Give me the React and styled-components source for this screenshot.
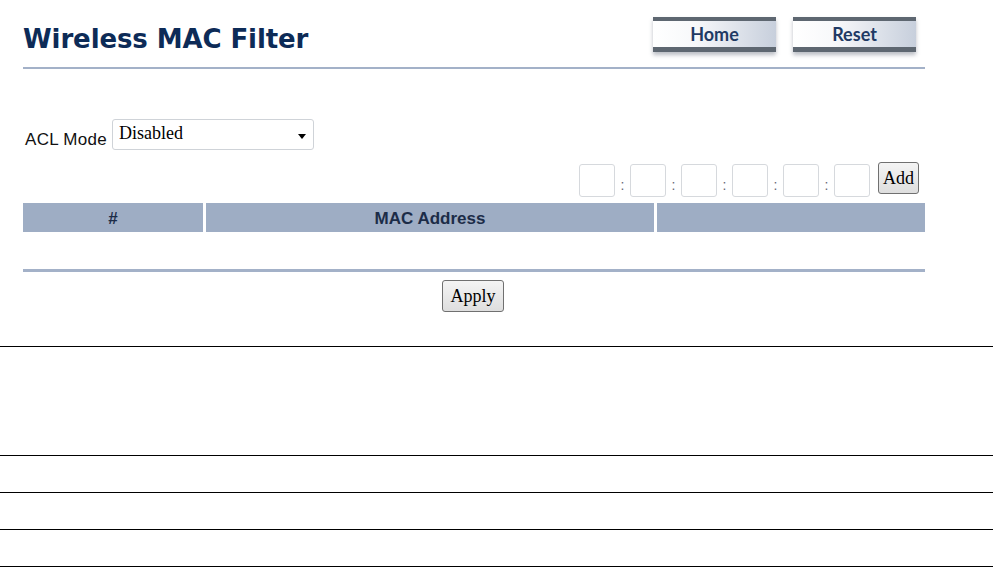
import React from "react";
import styled, { createGlobalStyle } from "styled-components";

const Global = createGlobalStyle`
  html, body { margin: 0; padding: 0; background: #fff; }
  body { font-family: "Liberation Sans", Arial, sans-serif; }
  * { box-sizing: border-box; }
`;

const Page = styled.div`
  width: 993px;
  height: 567px;
  overflow: hidden;
  display: flex;
  flex-direction: column;
`;

const Content = styled.div`
  margin-left: 23px;
  width: 902px;
  display: flex;
  flex-direction: column;
`;

const Header = styled.div`
  height: 67px;
  display: flex;
  justify-content: space-between;
  align-items: flex-start;
  padding-right: 9px;
`;

const Title = styled.h1`
  margin: 0;
  padding-top: 24px;
  font-family: "DejaVu Sans", Verdana, sans-serif;
  font-weight: bold;
  font-size: 26px;
  line-height: 30px;
  color: #0d2b57;
  letter-spacing: -0.1px;
`;

const NavButtons = styled.div`
  display: flex;
  gap: 17px;
  margin-top: 17px;
`;

const NavButton = styled.div`
  width: 123px;
  height: 35px;
  border-top: 4px solid #5e6771;
  border-bottom: 5px solid #5e6771;
  background: linear-gradient(to right, #ffffff 0%, #f7f8fa 35%, #c7cfdc 100%);
  box-shadow: 0 3px 4px rgba(60, 70, 90, 0.35);
  display: flex;
  align-items: center;
  justify-content: center;
  font-family: Lato, "Open Sans", sans-serif;
  font-weight: 700;
  font-size: 18px;
  color: #1f3a64;
  padding-bottom: 1px;
`;

const Rule = styled.div`
  height: ${(p) => p.$h}px;
  background: #a3b1c8;
`;

const AclRow = styled.div`
  display: flex;
  align-items: flex-end;
  gap: 5px;
  margin-top: 50px;
  padding-left: 2px;
`;

const Label = styled.span`
  font-size: 17px;
  line-height: 20px;
  letter-spacing: 0.3px;
  color: #111;
`;

const SelectBox = styled.div`
  width: 202px;
  height: 31px;
  border: 1px solid #cfd3d8;
  border-radius: 3px;
  display: flex;
  align-items: flex-start;
  justify-content: space-between;
  padding: 3px 7px 0 6px;
  font-family: "Liberation Serif", "Times New Roman", serif;
  font-size: 18px;
  line-height: 20px;
  color: #000;
`;

const Arrow = styled.span`
  width: 0;
  height: 0;
  margin-top: 11px;
  border-left: 4.5px solid transparent;
  border-right: 4.5px solid transparent;
  border-top: 5px solid #000;
`;

const MacRow = styled.div`
  display: flex;
  justify-content: flex-end;
  align-items: flex-start;
  margin-top: 12px;
  padding-right: 6px;
`;

const OctetInput = styled.input`
  width: 36px;
  height: 33px;
  margin-top: 2px;
  border: 1px solid #d6d9dd;
  border-radius: 3px;
  padding: 0;
  background: #fff;
`;

const Colon = styled.span`
  width: 15px;
  margin-top: 2px;
  height: 33px;
  display: flex;
  align-items: flex-end;
  justify-content: center;
  padding-bottom: 5px;
  font-size: 14px;
  line-height: 14px;
  color: #667;
`;

const FormButton = styled.button`
  height: 32px;
  width: ${(p) => p.$w}px;
  margin-left: ${(p) => p.$ml || 0}px;
  border: 1px solid #707070;
  border-radius: 3px;
  background: linear-gradient(to bottom, #f4f4f4, #dedede);
  font-family: "Liberation Serif", "Times New Roman", serif;
  font-size: 18px;
  color: #000;
  padding: 0;
  display: flex;
  align-items: center;
  justify-content: center;
`;

const TableHead = styled.div`
  margin-top: 6px;
  display: grid;
  grid-template-columns: 180px 448px 1fr;
  column-gap: 3px;
`;

const HeadCell = styled.div`
  height: 29px;
  background: #9eadc4;
  display: flex;
  align-items: center;
  justify-content: center;
  font-weight: bold;
  font-size: 17px;
  color: #1c2c48;
  padding-top: 2px;
`;

const TableBody = styled.div`
  height: 37px;
`;

const ApplyRow = styled.div`
  display: flex;
  justify-content: center;
  margin-top: 8px;
  padding-right: 2px;
`;

const Footer = styled.div`
  margin-top: 34px;
  display: flex;
  flex-direction: column;
`;

const FooterRow = styled.div`
  height: ${(p) => p.$h}px;
  border-top: 1px solid #000;
  border-bottom: ${(p) => (p.$last ? "1px solid #000" : "none")};
`;

export default function App() {
  const octets = [0, 1, 2, 3, 4, 5];
  return (
    <>
      <Global />
      <Page>
        <Content>
          <Header>
            <Title>Wireless MAC Filter</Title>
            <NavButtons>
              <NavButton>Home</NavButton>
              <NavButton>Reset</NavButton>
            </NavButtons>
          </Header>
          <Rule $h={2} />
          <AclRow>
            <Label>ACL Mode</Label>
            <SelectBox>
              <span>Disabled</span>
              <Arrow />
            </SelectBox>
          </AclRow>
          <MacRow>
            {octets.map((i) => (
              <React.Fragment key={i}>
                <OctetInput type="text" />
                {i < 5 && <Colon>:</Colon>}
              </React.Fragment>
            ))}
            <FormButton $w={41} $ml={8}>Add</FormButton>
          </MacRow>
          <TableHead>
            <HeadCell>#</HeadCell>
            <HeadCell>MAC Address</HeadCell>
            <HeadCell />
          </TableHead>
          <TableBody />
          <Rule $h={3} />
          <ApplyRow>
            <FormButton $w={62}>Apply</FormButton>
          </ApplyRow>
        </Content>
        <Footer>
          <FooterRow $h={109} />
          <FooterRow $h={37} />
          <FooterRow $h={37} />
          <FooterRow $h={38} $last />
        </Footer>
      </Page>
    </>
  );
}
